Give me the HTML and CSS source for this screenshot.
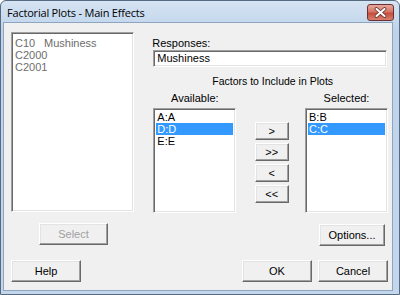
FILE: index.html
```html
<!DOCTYPE html>
<html lang="en">
<head>
  <meta charset="UTF-8">
  <title>Factorial Plots - Main Effects</title>
  <link rel="stylesheet" href="styles.css">
</head>
<body>
  <div class="window">
    <div class="titlebar">
      <span class="title">Factorial Plots - Main Effects</span>
      <button class="close-btn" aria-label="Close">
        <svg width="13" height="11" viewBox="0 0 13 11">
          <path d="M2.5 2 L10.5 9 M10.5 2 L2.5 9" stroke="#5a2424" stroke-width="3.6" stroke-linecap="round"/>
          <path d="M2.5 2 L10.5 9 M10.5 2 L2.5 9" stroke="#fff" stroke-width="2.2" stroke-linecap="round"/>
        </svg>
      </button>
    </div>
    <div class="client">
      <div class="main">
        <div class="left-col">
          <ul class="listbox vars">
            <li><span class="col-id">C10</span>Mushiness</li>
            <li>C2000</li>
            <li>C2001</li>
          </ul>
          <button class="btn select-btn" disabled>Select</button>
        </div>
        <div class="right-col">
          <label class="field-label">Responses:</label>
          <div class="textbox">Mushiness</div>
          <div class="group-title">Factors to Include in Plots</div>
          <div class="factors">
            <div class="factor-list">
              <div class="list-label">Available:</div>
              <ul class="listbox small">
                <li>A:A</li>
                <li class="selected">D:D</li>
                <li>E:E</li>
              </ul>
            </div>
            <div class="move-btns">
              <button class="btn arrow">&gt;</button>
              <button class="btn arrow">&gt;&gt;</button>
              <button class="btn arrow">&lt;</button>
              <button class="btn arrow">&lt;&lt;</button>
            </div>
            <div class="factor-list">
              <div class="list-label">Selected:</div>
              <ul class="listbox small">
                <li>B:B</li>
                <li class="selected">C:C</li>
              </ul>
            </div>
          </div>
          <div class="options-row">
            <button class="btn options-btn">Options...</button>
          </div>
        </div>
      </div>
      <div class="bottom-row">
        <button class="btn">Help</button>
        <div class="spacer"></div>
        <button class="btn">OK</button>
        <button class="btn">Cancel</button>
      </div>
    </div>
  </div>
</body>
</html>
```

FILE: styles.css
```css
html, body {
  margin: 0;
  padding: 0;
  background: #fff;
}
body {
  font-family: "Liberation Sans", Arial, sans-serif;
  font-size: 11px;
  color: #000;
}
.window {
  box-sizing: border-box;
  width: 400px;
  height: 295px;
  border: 1px solid #566a82;
  border-radius: 6px 6px 0 0;
  background: linear-gradient(#d6e4f3, #bed3ea 30px, #c3d6ec);
  padding: 0 6px 3px 2px;
  display: flex;
  flex-direction: column;
}
.titlebar {
  height: 21px;
  display: flex;
  align-items: center;
  justify-content: space-between;
}
.title {
  font-family: "Open Sans", "Liberation Sans", sans-serif;
  font-size: 11px;
  letter-spacing: -0.2px;
  color: #000;
  padding-left: 4px;
  margin-top: 1px;
}
.close-btn {
  width: 27px;
  height: 17px;
  margin-top: 2px;
  margin-right: -1px;
  padding: 0;
  border: 1px solid #6c3030;
  border-radius: 3px;
  background: linear-gradient(#e7a89c, #d77666 45%, #c44d3e 55%, #d8806f);
  display: flex;
  align-items: center;
  justify-content: center;
}
.client {
  flex: 1;
  border: 1px solid #8ea5bf;
  background: #f0f0f0;
  padding: 9px 4px 0 7px;
  display: flex;
  flex-direction: column;
}
.main {
  display: flex;
  gap: 19px;
}
.left-col {
  width: 124px;
  display: flex;
  flex-direction: column;
}
.listbox {
  list-style: none;
  margin: 0;
  padding: 2px 2px;
  background: #fff;
  border: 1px solid;
  border-color: #a0a0a0 #fff #fff #a0a0a0;
  box-shadow: inset 1px 1px 0 #696969, inset -1px -1px 0 #e3e3e3;
  box-sizing: border-box;
}
.listbox li {
  line-height: 12px;
  height: 12px;
  padding-left: 1px;
  white-space: nowrap;
}
.vars {
  height: 180px;
  padding-top: 4px;
  color: #6d6d6d;
  font-size: 11px;
}
.col-id {
  display: inline-block;
  width: 29px;
}
.listbox .selected {
  background: #3399ff;
  color: #fff;
}
.btn {
  font-family: "Liberation Sans", Arial, sans-serif;
  font-size: 11px;
  color: #000;
  height: 22px;
  width: 70px;
  padding: 0;
  background: #f0f0f0;
  border: 1px solid;
  border-color: #fff #696969 #696969 #fff;
  box-shadow: inset -1px -1px 0 #a0a0a0, inset 1px 1px 0 #e3e3e3;
}
.btn:disabled {
  color: #a0a0a0;
}
.select-btn {
  width: 69px;
  margin-top: 11px;
  margin-left: 28px;
}
.right-col {
  width: 236px;
  display: flex;
  flex-direction: column;
}
.field-label {
  line-height: 13px;
  margin-top: 5px;
  margin-left: -1px;
}
.textbox {
  box-sizing: border-box;
  height: 17px;
  width: 234px;
  background: #fff;
  border: 1px solid;
  border-color: #a0a0a0 #fff #fff #a0a0a0;
  box-shadow: inset 1px 1px 0 #696969, inset -1px -1px 0 #e3e3e3;
  padding: 1px 3px;
  line-height: 13px;
}
.group-title {
  font-size: 10.5px;
  line-height: 13px;
  margin-top: 8px;
  text-align: center;
  padding-left: 4px;
}
.factors {
  display: flex;
  margin-top: 4px;
}
.factor-list {
  width: 83px;
  display: flex;
  flex-direction: column;
}
.list-label {
  text-align: center;
  line-height: 13px;
  margin-bottom: 3px;
}
.listbox.small {
  height: 105px;
  padding: 2px 2px;
}
.move-btns {
  flex: 1;
  display: flex;
  flex-direction: column;
  align-items: center;
  gap: 3px;
  padding-top: 30px;
  padding-left: 2px;
}
.btn.arrow {
  width: 34px;
  height: 18px;
}
.options-row {
  display: flex;
  justify-content: flex-end;
  margin-top: 11px;
  padding-right: 3px;
}
.options-btn {
  width: 66px;
}
.bottom-row {
  display: flex;
  gap: 6px;
  margin-top: 14px;
}
.spacer {
  flex: 1;
}
```
